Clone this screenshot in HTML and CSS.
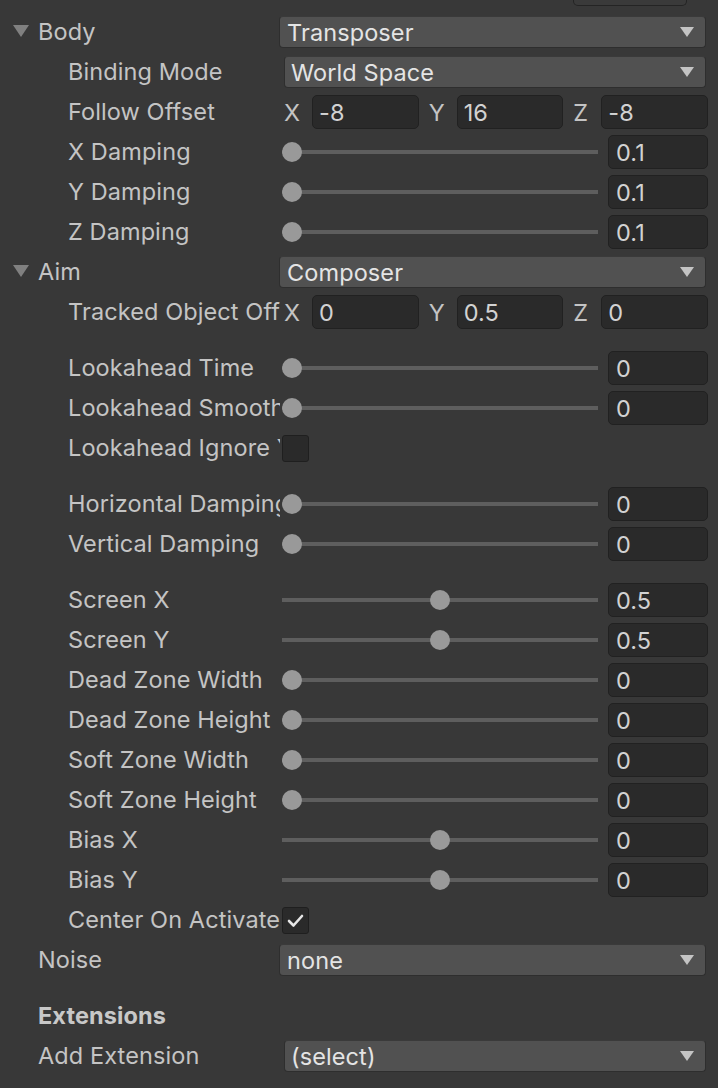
FILE: index.html
```html
<!DOCTYPE html>
<html>
<head>
<meta charset="utf-8">
<link rel="stylesheet" href="styles.css">
</head>
<body>
<div class="inspector">
  <div class="stub-row"><div class="stub"></div></div>

  <div class="row">
    <div class="label top"><span class="fold"></span>Body</div>
    <div class="value"><div class="dropdown top-dd">Transposer<span class="arrow"></span></div></div>
  </div>
  <div class="row">
    <div class="label">Binding Mode</div>
    <div class="value"><div class="dropdown">World Space<span class="arrow"></span></div></div>
  </div>
  <div class="row">
    <div class="label">Follow Offset</div>
    <div class="value vector">
      <div class="seg"><span class="axis">X</span><div class="field">-8</div></div>
      <div class="seg"><span class="axis">Y</span><div class="field">16</div></div>
      <div class="seg"><span class="axis">Z</span><div class="field">-8</div></div>
    </div>
  </div>
  <div class="row">
    <div class="label">X Damping</div>
    <div class="value slider"><div class="track"><span class="thumb" style="left: calc((100% - 20px) * 0.0)"></span></div><div class="field num">0.1</div></div>
  </div>
  <div class="row">
    <div class="label">Y Damping</div>
    <div class="value slider"><div class="track"><span class="thumb" style="left: calc((100% - 20px) * 0.0)"></span></div><div class="field num">0.1</div></div>
  </div>
  <div class="row">
    <div class="label">Z Damping</div>
    <div class="value slider"><div class="track"><span class="thumb" style="left: calc((100% - 20px) * 0.0)"></span></div><div class="field num">0.1</div></div>
  </div>

  <div class="row">
    <div class="label top"><span class="fold"></span>Aim</div>
    <div class="value"><div class="dropdown top-dd">Composer<span class="arrow"></span></div></div>
  </div>
  <div class="row">
    <div class="label">Tracked Object Offset</div>
    <div class="value vector">
      <div class="seg"><span class="axis">X</span><div class="field">0</div></div>
      <div class="seg"><span class="axis">Y</span><div class="field">0.5</div></div>
      <div class="seg"><span class="axis">Z</span><div class="field">0</div></div>
    </div>
  </div>

  <div class="spacer"></div>
  <div class="row">
    <div class="label">Lookahead Time</div>
    <div class="value slider"><div class="track"><span class="thumb" style="left: calc((100% - 20px) * 0.0)"></span></div><div class="field num">0</div></div>
  </div>
  <div class="row">
    <div class="label">Lookahead Smoothing</div>
    <div class="value slider"><div class="track"><span class="thumb" style="left: calc((100% - 20px) * 0.0)"></span></div><div class="field num">0</div></div>
  </div>
  <div class="row">
    <div class="label">Lookahead Ignore Y</div>
    <div class="value"><div class="checkbox"></div></div>
  </div>

  <div class="spacer"></div>
  <div class="row">
    <div class="label">Horizontal Damping</div>
    <div class="value slider"><div class="track"><span class="thumb" style="left: calc((100% - 20px) * 0.0)"></span></div><div class="field num">0</div></div>
  </div>
  <div class="row">
    <div class="label">Vertical Damping</div>
    <div class="value slider"><div class="track"><span class="thumb" style="left: calc((100% - 20px) * 0.0)"></span></div><div class="field num">0</div></div>
  </div>

  <div class="spacer"></div>
  <div class="row">
    <div class="label">Screen X</div>
    <div class="value slider"><div class="track"><span class="thumb" style="left: calc((100% - 20px) * 0.5)"></span></div><div class="field num">0.5</div></div>
  </div>
  <div class="row">
    <div class="label">Screen Y</div>
    <div class="value slider"><div class="track"><span class="thumb" style="left: calc((100% - 20px) * 0.5)"></span></div><div class="field num">0.5</div></div>
  </div>
  <div class="row">
    <div class="label">Dead Zone Width</div>
    <div class="value slider"><div class="track"><span class="thumb" style="left: calc((100% - 20px) * 0.0)"></span></div><div class="field num">0</div></div>
  </div>
  <div class="row">
    <div class="label">Dead Zone Height</div>
    <div class="value slider"><div class="track"><span class="thumb" style="left: calc((100% - 20px) * 0.0)"></span></div><div class="field num">0</div></div>
  </div>
  <div class="row">
    <div class="label">Soft Zone Width</div>
    <div class="value slider"><div class="track"><span class="thumb" style="left: calc((100% - 20px) * 0.0)"></span></div><div class="field num">0</div></div>
  </div>
  <div class="row">
    <div class="label">Soft Zone Height</div>
    <div class="value slider"><div class="track"><span class="thumb" style="left: calc((100% - 20px) * 0.0)"></span></div><div class="field num">0</div></div>
  </div>
  <div class="row">
    <div class="label">Bias X</div>
    <div class="value slider"><div class="track"><span class="thumb" style="left: calc((100% - 20px) * 0.5)"></span></div><div class="field num">0</div></div>
  </div>
  <div class="row">
    <div class="label">Bias Y</div>
    <div class="value slider"><div class="track"><span class="thumb" style="left: calc((100% - 20px) * 0.5)"></span></div><div class="field num">0</div></div>
  </div>
  <div class="row">
    <div class="label">Center On Activate</div>
    <div class="value"><div class="checkbox checked"><svg viewBox="0 0 27 27" width="27" height="27"><path d="M7 14 L11.5 18.5 L20 9" fill="none" stroke="#e6e6e6" stroke-width="2.6" stroke-linecap="round" stroke-linejoin="round"/></svg></div></div>
  </div>

  <div class="row">
    <div class="label top">Noise</div>
    <div class="value"><div class="dropdown top-dd">none<span class="arrow"></span></div></div>
  </div>

  <div class="spacer"></div>
  <div class="row">
    <div class="label top bold">Extensions</div>
  </div>
  <div class="row">
    <div class="label top">Add Extension</div>
    <div class="value"><div class="dropdown">(select)<span class="arrow"></span></div></div>
  </div>
</div>
</body>
</html>
```

FILE: styles.css
```css
html, body {
  margin: 0;
  padding: 0;
  background: #383838;
}
body {
  font-family: "Inter", "Noto Sans", sans-serif;
  font-size: 23.5px;
  font-weight: 400;
  letter-spacing: 0.1px;
  color: #c4c4c4;
  overflow: hidden;
}
.inspector {
  width: 718px;
  display: flex;
  flex-direction: column;
}
.stub-row {
  height: 12px;
  display: flex;
}
.stub {
  margin-left: 573px;
  width: 112px;
  height: 5px;
  border: 1px solid #242424;
  border-top: none;
  border-radius: 0 0 5px 5px;
  background: #3a3a3a;
}
.row {
  height: 40px;
  display: flex;
  align-items: center;
  padding-right: 10px;
  box-sizing: border-box;
}
.spacer {
  height: 16px;
}
.label {
  flex: 0 0 280px;
  box-sizing: border-box;
  padding-left: 68px;
  white-space: nowrap;
  overflow: hidden;
  position: relative;
  line-height: 40px;
}
.label.top {
  padding-left: 38px;
}
.label.bold {
  font-weight: 700;
  color: #c8c8c8;
  letter-spacing: 0.1px;
}
.fold {
  position: absolute;
  left: 13px;
  top: 13px;
  width: 0;
  height: 0;
  border-left: 8px solid transparent;
  border-right: 8px solid transparent;
  border-top: 12px solid #808080;
}
.value {
  flex: 1;
  display: flex;
  align-items: center;
  min-width: 0;
  padding-left: 2px;
}
.dropdown {
  flex: 1;
  height: 32px;
  box-sizing: border-box;
  margin-left: 2px;
  margin-right: 2px;
  padding-left: 6px;
  padding-right: 11px;
  display: flex;
  align-items: center;
  justify-content: space-between;
  background: #515151;
  border: 1px solid #2e2e2e;
  border-top-color: #3a3a3a;
  border-radius: 4px;
  color: #e4e4e4;
}
.dropdown.top-dd {
  margin-left: -3px;
  padding-left: 7px;
}
.arrow {
  width: 0;
  height: 0;
  border-left: 7px solid transparent;
  border-right: 7px solid transparent;
  border-top: 10px solid #c4c4c4;
}
.field {
  height: 34px;
  box-sizing: border-box;
  background: #2a2a2a;
  border: 1px solid #212121;
  border-radius: 5px;
  color: #d2d2d2;
  padding-left: 6px;
  display: flex;
  align-items: center;
  white-space: nowrap;
  overflow: hidden;
}
.vector {
  padding-left: 4px;
  gap: 10px;
}
.seg {
  flex: 1;
  display: flex;
  align-items: center;
}
.axis {
  flex: 0 0 28px;
  color: #c4c4c4;
}
.seg .field {
  flex: 1;
}
.slider {
  gap: 10px;
}
.track {
  flex: 0 0 316px;
  height: 20px;
  position: relative;
  display: flex;
  align-items: center;
}
.track::before {
  content: "";
  display: block;
  width: 100%;
  height: 4px;
  background: #5e5e5e;
}
.thumb {
  position: absolute;
  top: 0;
  width: 20px;
  height: 20px;
  border-radius: 50%;
  background: #999999;
}
.field.num {
  flex: 1;
  padding-left: 7px;
}
.checkbox {
  width: 27px;
  height: 27px;
  box-sizing: border-box;
  background: #2a2a2a;
  border: 1px solid #1f1f1f;
  border-radius: 3px;
  display: flex;
  align-items: center;
  justify-content: center;
}
.checkbox svg {
  display: block;
  flex: 0 0 auto;
}
```
